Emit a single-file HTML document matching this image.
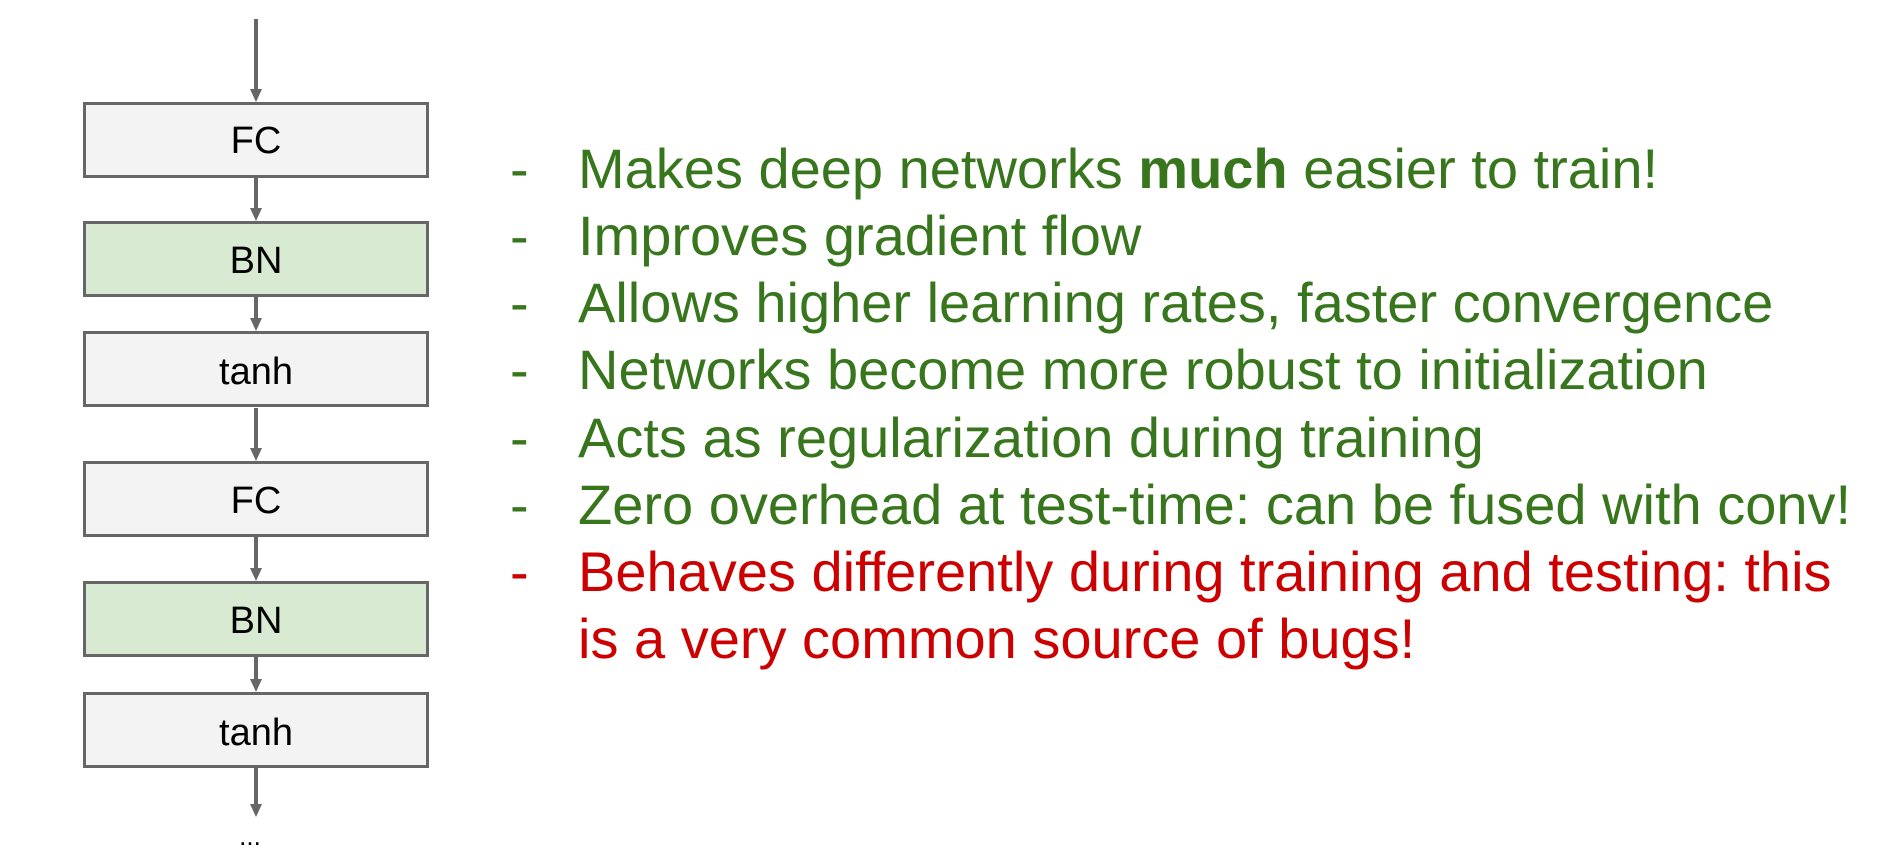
<!DOCTYPE html>
<html><head><meta charset="utf-8"><style>
html,body{margin:0;padding:0;background:#fff;width:1898px;height:862px;overflow:hidden;position:relative;font-family:"Liberation Sans",Arial,sans-serif}
.l{position:absolute;left:578px;font-size:56px;line-height:67px;white-space:nowrap;color:#38761d}
.d{position:absolute;left:510px;font-size:56px;line-height:67px;color:#38761d}
.r{color:#cc0000}
</style></head><body>
<svg width="520" height="862" style="position:absolute;left:0;top:0" font-family="Liberation Sans, Arial, sans-serif" font-size="38" text-anchor="middle">
<g fill="#666">
<rect x="254" y="19" width="4" height="72"/><polygon points="250,89 262,89 256,102"/>
<rect x="254" y="178" width="4" height="32"/><polygon points="250,208 262,208 256,221"/>
<rect x="254" y="296" width="4" height="23"/><polygon points="250,318 262,318 256,331"/>
<rect x="254" y="408" width="4" height="41"/><polygon points="250,448 262,448 256,461"/>
<rect x="254" y="537" width="4" height="32"/><polygon points="250,568 262,568 256,581"/>
<rect x="254" y="656" width="4" height="24"/><polygon points="250,679 262,679 256,692"/>
<rect x="254" y="768" width="4" height="37"/><polygon points="250,804 262,804 256,817"/>
</g>
<g stroke="#666" stroke-width="3">
<rect x="84.5" y="103.5" width="343" height="73" fill="#f3f3f3"/>
<rect x="84.5" y="222.5" width="343" height="73" fill="#d9ead3"/>
<rect x="84.5" y="332.5" width="343" height="73" fill="#f3f3f3"/>
<rect x="84.5" y="462.5" width="343" height="73" fill="#f3f3f3"/>
<rect x="84.5" y="582.5" width="343" height="73" fill="#d9ead3"/>
<rect x="84.5" y="693.5" width="343" height="73" fill="#f3f3f3"/>
</g>
<g fill="#000">
<text x="256" y="153">FC</text>
<text x="256" y="273">BN</text>
<text x="256" y="384">tanh</text>
<text x="256" y="513">FC</text>
<text x="256" y="633">BN</text>
<text x="256" y="745">tanh</text>
<text x="250" y="845" font-size="26">...</text>
</g>
</svg>
<div class="d" style="top:135px">-</div><div class="l" style="top:135px">Makes deep networks <b>much</b> easier to train!</div>
<div class="d" style="top:202px">-</div><div class="l" style="top:202px">Improves gradient flow</div>
<div class="d" style="top:269px">-</div><div class="l" style="top:269px">Allows higher learning rates, faster convergence</div>
<div class="d" style="top:336px">-</div><div class="l" style="top:336px">Networks become more robust to initialization</div>
<div class="d" style="top:404px">-</div><div class="l" style="top:404px">Acts as regularization during training</div>
<div class="d" style="top:471px">-</div><div class="l" style="top:471px">Zero overhead at test-time: can be fused with conv!</div>
<div class="d r" style="top:538px">-</div><div class="l r" style="top:538px">Behaves differently during training and testing: this</div>
<div class="l r" style="top:605px">is a very common source of bugs!</div>
</body></html>
